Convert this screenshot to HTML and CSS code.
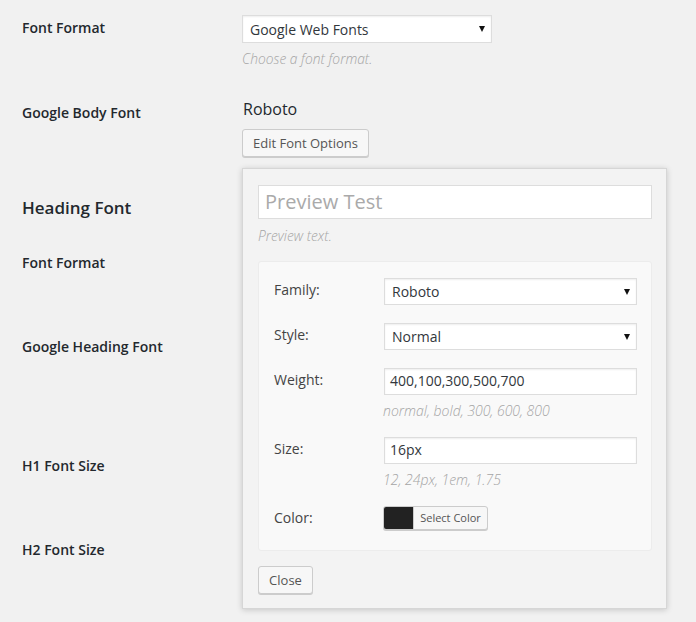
FILE: index.html
```html
<!DOCTYPE html>
<html>
<head>
<meta charset="utf-8">
<link rel="stylesheet" href="styles.css">
</head>
<body>
<div class="page">
  <div class="row r1">
    <div class="label">Font Format</div>
    <div class="field">
      <div class="select wide"><span>Google Web Fonts</span><i class="arrow"></i></div>
      <p class="desc">Choose a font format.</p>
    </div>
  </div>
  <div class="row r2">
    <div class="label">Google Body Font</div>
    <div class="field field-body">
      <div class="font-name">Roboto</div>
      <button class="btn btn-edit">Edit Font Options</button>
      <div class="popup">
        <div class="preview">Preview Test</div>
        <p class="desc">Preview text.</p>
        <div class="options">
          <div class="opt">
            <div class="opt-label">Family:</div>
            <div class="opt-field"><div class="select"><span>Roboto</span><i class="arrow"></i></div></div>
          </div>
          <div class="opt">
            <div class="opt-label">Style:</div>
            <div class="opt-field"><div class="select"><span>Normal</span><i class="arrow"></i></div></div>
          </div>
          <div class="opt">
            <div class="opt-label">Weight:</div>
            <div class="opt-field"><div class="input">400,100,300,500,700</div><p class="hint">normal, bold, 300, 600, 800</p></div>
          </div>
          <div class="opt">
            <div class="opt-label">Size:</div>
            <div class="opt-field"><div class="input">16px</div><p class="hint">12, 24px, 1em, 1.75</p></div>
          </div>
          <div class="opt opt-color">
            <div class="opt-label">Color:</div>
            <div class="opt-field"><button class="color-btn"><span class="swatch"></span><span class="color-text">Select Color</span></button></div>
          </div>
        </div>
        <button class="btn btn-close">Close</button>
      </div>
    </div>
  </div>
  <div class="row r3"><h3 class="heading">Heading Font</h3></div>
  <div class="row r4"><div class="label">Font Format</div></div>
  <div class="row r5"><div class="label">Google Heading Font</div></div>
  <div class="row r6"><div class="label">H1 Font Size</div></div>
  <div class="row r7"><div class="label">H2 Font Size</div></div>
</div>
</body>
</html>
```
FILE: styles.css
```css
* { box-sizing: border-box; }
html, body { margin: 0; padding: 0; }
body {
  background: #f1f1f1;
  font-family: "Open Sans", "Liberation Sans", sans-serif;
  color: #444;
  font-size: 13px;
  width: 696px;
  height: 622px;
  overflow: hidden;
}
.page { padding-left: 22px; }
.row { display: flex; }
.r1 { height: 85px; }
.r2 { height: 85px; }
.r3 { height: 65px; }
.r4 { height: 84px; }
.r5 { height: 119px; }
.r6 { height: 84px; }
.r7 { height: 84px; }
.label {
  width: 220px;
  flex: none;
  padding-top: 19px;
  font-size: 14px;
  line-height: 18px;
  font-weight: 600;
  color: #23282d;
}
.heading {
  margin: 0;
  padding-top: 27px;
  font-size: 17px;
  line-height: 22px;
  font-weight: 600;
  color: #23282d;
}
.field { padding-top: 15px; position: relative; }
.field-body { padding-top: 13px; }
.select {
  display: flex;
  align-items: center;
  justify-content: space-between;
  height: 28px;
  background: #fff;
  border: 1px solid #ddd;
  box-shadow: inset 0 1px 2px rgba(0,0,0,.07);
  padding: 0 6px 0 7px;
  font-size: 14px;
  color: #32373c;
}
.select.wide { width: 250px; height: 28px; }
.arrow {
  width: 0; height: 0;
  border-left: 3px solid transparent;
  border-right: 3px solid transparent;
  border-top: 6px solid #111;
}
.desc {
  margin: 6px 0 0 0;
  font-size: 13.8px;
  line-height: 20px;
  font-style: italic;
  color: #a5a5a5;
  font-weight: 300;
}
.font-name {
  font-size: 16px;
  line-height: 22px;
  color: #23282d;
  margin-left: 1px;
}
.btn {
  display: block;
  font-family: "Open Sans", "Liberation Sans", sans-serif;
  background: #f7f7f7;
  border: 1px solid #ccc;
  box-shadow: 0 1px 0 #ccc;
  border-radius: 3px;
  color: #555;
  font-size: 13px;
  height: 28px;
  padding: 0 10px;
  line-height: 26px;
}
.btn-edit { margin-top: 9px; width: 127px; padding: 0; }
.popup {
  position: absolute;
  left: 0;
  top: 83px;
  width: 425px;
  height: 441px;
  background: #f3f3f3;
  border: 1px solid #d6d6d6;
  box-shadow: 0 1px 6px rgba(0,0,0,.18);
  padding: 16px 14px 0 15px;
}
.preview {
  height: 34px;
  background: #fff;
  border: 1px solid #ddd;
  font-size: 20px;
  line-height: 32px;
  color: #aaa;
  padding-left: 6px;
}
.popup .desc { margin-top: 7px; }
.options {
  margin-top: 15px;
  height: 290px;
  background: #f9f9f9;
  border: 1px solid #ececec;
  border-radius: 3px;
  padding: 16px 14px 0 15px;
}
.opt { display: flex; margin-bottom: 18px; }
.opt-label {
  width: 110px;
  flex: none;
  font-size: 14px;
  line-height: 20px;
  color: #444;
  padding-top: 2px;
}
.opt-field { flex: 1; }
.opt .select { height: 27px; padding-left: 7px; }
.input {
  height: 27px;
  background: #fff;
  border: 1px solid #ddd;
  box-shadow: inset 0 1px 2px rgba(0,0,0,.07);
  font-size: 14px;
  line-height: 24px;
  padding-left: 5px;
  color: #32373c;
}
.hint {
  margin: 6px 0 0 -1px;
  font-size: 14px;
  line-height: 20px;
  font-style: italic;
  font-weight: 300;
  color: #a5a5a5;
}
.opt:nth-child(3), .opt:nth-child(4) { margin-bottom: 16px; }
.opt-color { margin-bottom: 0; }
.color-btn {
  display: flex;
  align-items: stretch;
  height: 24px;
  width: 105px;
  padding: 0;
  margin-left: -1px;
  background: #f7f7f7;
  border: 1px solid #ccc;
  box-shadow: 0 1px 0 #ccc;
  border-radius: 3px;
  overflow: hidden;
  font-family: "Open Sans", "Liberation Sans", sans-serif;
}
.swatch { width: 30px; background: #222; border-right: 1px solid #ccc; }
.color-text {
  flex: 1;
  font-size: 11px;
  line-height: 22px;
  color: #555;
  text-align: center;
}
.btn-close { margin-top: 15px; width: 55px; height: 28px; padding: 0; }
```
